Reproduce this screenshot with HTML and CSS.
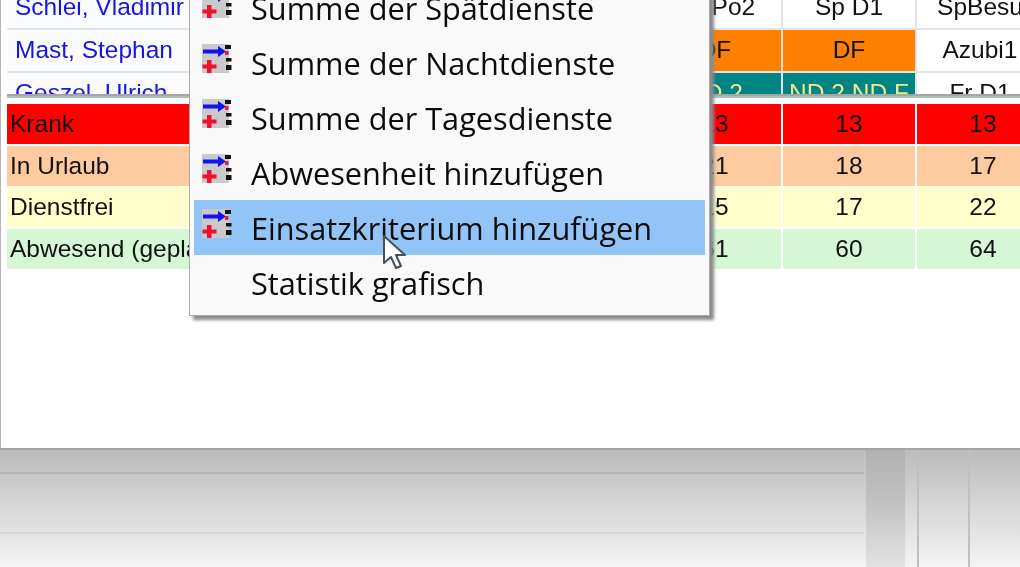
FILE: index.html
```html
<!DOCTYPE html>
<html lang="de">
<head>
<meta charset="utf-8">
<title>Dienstplan</title>
<link rel="stylesheet" href="styles.css">
</head>
<body>
<svg class="defs" width="0" height="0" aria-hidden="true">
  <symbol id="sum" viewBox="0 0 30 30">
    <rect x="0" y="0" width="27" height="29" fill="#cacaca"/>
    <path d="M1 5.500h15v-3.500l8 5.500-8 5.500v-3.500h-15z" fill="#1212f2"/>
    <path d="M5 16h4.500v4.500h5v4h-5v4.500h-4.500v-4.500h-4.500v-4h4.500z" fill="#f01030"/>
    <rect x="23" y="1" width="6" height="4" fill="#111"/>
    <rect x="23" y="7" width="3.500" height="4" fill="#e02040"/>
    <rect x="24" y="14" width="5.500" height="3.500" fill="#111"/>
    <rect x="24" y="21" width="5.500" height="5" fill="#111"/>
  </symbol>
</svg>
<div class="screen">
  <main class="window">
    <section class="plan">
      <div class="grid plan-grid">
        <div class="cell name">Schlei, Vladimir</div><div class="cell">Sp Po2</div><div class="cell">Sp D1</div><div class="cell shift">SpBesu</div>
        <div class="cell name">Mast, Stephan</div><div class="cell orange">DF</div><div class="cell orange">DF</div><div class="cell shift">Azubi1</div>
        <div class="cell name">Geszel, Ulrich</div><div class="cell teal">ND 2</div><div class="cell teal">ND 2 ND F</div><div class="cell shift">Fr D1</div>
      </div>
    </section>
    <div class="divider"></div>
    <section class="grid summary">
      <div class="cell label red">Krank</div><div class="cell red">13</div><div class="cell red">13</div><div class="cell red">13</div>
      <div class="cell label peach">In Urlaub</div><div class="cell peach">21</div><div class="cell peach">18</div><div class="cell peach">17</div>
      <div class="cell label yellow">Dienstfrei</div><div class="cell yellow">15</div><div class="cell yellow">17</div><div class="cell yellow">22</div>
      <div class="cell label green">Abwesend (geplant)</div><div class="cell green">61</div><div class="cell green">60</div><div class="cell green">64</div>
    </section>
  </main>
  <footer class="bottom">
    <div class="tracks">
      <div class="track first"></div>
      <div class="track second"></div>
    </div>
    <div class="gutter"></div>
    <div class="pane"></div>
    <div class="pane wide"></div>
    <div class="pane last"></div>
  </footer>
  <nav class="menu">
    <div class="item"><svg class="icon"><use href="#sum"/></svg><span>Summe der Spätdienste</span></div>
    <div class="item"><svg class="icon"><use href="#sum"/></svg><span>Summe der Nachtdienste</span></div>
    <div class="item"><svg class="icon"><use href="#sum"/></svg><span>Summe der Tagesdienste</span></div>
    <div class="item"><svg class="icon"><use href="#sum"/></svg><span>Abwesenheit hinzufügen</span></div>
    <div class="item active"><svg class="icon"><use href="#sum"/></svg><span>Einsatzkriterium hinzufügen</span></div>
    <div class="item"><span class="icon"></span><span>Statistik grafisch</span></div>
  </nav>
  <svg class="pointer" width="26" height="36" viewBox="0 0 26 36">
    <path d="M2 1v27l7-6 5 11 5-2-5-11h9z" fill="#fff" stroke="#46505e" stroke-width="2" stroke-linejoin="round"/>
  </svg>
</div>
</body>
</html>
```
FILE: styles.css
```css
html, body {
  margin: 0;
  padding: 0;
  background: #fff;
}
.defs {
  position: absolute;
}
.screen {
  position: relative;
  width: 1020px;
  height: 567px;
  overflow: hidden;
  filter: blur(0.6px);
}
.window {
  height: 448px;
  box-sizing: border-box;
  padding-left: 6px;
  background: #fff;
  border-left: 1px solid #b5b5b5;
  overflow: hidden;
}
.plan {
  height: 94px;
  overflow: hidden;
  border-bottom: 2px solid #a6a6a6;
}
.grid {
  display: grid;
  grid-template-columns: 640px 132px 132px 132px;
  column-gap: 2px;
  font-family: "Liberation Sans", Arial, sans-serif;
  font-size: 24.500px;
  color: #111;
}
.plan-grid {
  margin-top: -13px;
  grid-auto-rows: 41px;
  row-gap: 2px;
  background: #e2e4e7;
}
.cell {
  background: #fff;
  text-align: center;
  line-height: 39px;
  white-space: nowrap;
  overflow: hidden;
}
.name {
  text-align: left;
  padding-left: 8px;
  color: #1616dc;
  background: #fafbfc;
}
.shift {
  padding-right: 6px;
}
.orange {
  background: #ff8000;
}
.teal {
  background: #008484;
  color: #f2e88c;
}
.divider {
  height: 8px;
  box-sizing: border-box;
  border-top: 2px solid #a9c0c0;
  background: #fff;
}
.summary {
  grid-auto-rows: 40px;
  row-gap: 1.600px;
}
.label {
  text-align: left;
  padding-left: 3px;
}
.red {
  background: #fe0000;
}
.peach {
  background: #fdcb9f;
}
.yellow {
  background: #ffffcc;
}
.green {
  background: #d6f7d6;
}
.bottom {
  height: 119px;
  display: flex;
  border-top: 2px solid #a4a4a4;
  box-sizing: border-box;
  background: linear-gradient(#bcbcbc, #c8c8c8 22%, #dedede 62%, #f4f4f4);
}
.tracks {
  width: 864px;
}
.track {
  box-sizing: border-box;
  border-bottom: 2px solid #b4b4b4;
}
.track.first {
  height: 24px;
}
.track.second {
  height: 60px;
  border-bottom-color: #d6d6d6;
}
.gutter {
  width: 39px;
  margin-left: 2px;
  background: linear-gradient(rgba(0, 0, 0, 0.06), rgba(0, 0, 0, 0.09) 40%, rgba(0, 0, 0, 0.07));
}
.pane {
  width: 12px;
  border-right: 2px solid #c0c0c0;
}
.pane.wide {
  width: 49px;
}
.pane.last {
  flex: 1;
  border-right: 0;
}
.menu {
  position: absolute;
  left: 189px;
  top: -26px;
  width: 521px;
  box-sizing: border-box;
  padding: 5px 4px 5px;
  background: #f9f9f9;
  border: 1px solid #a9a9a9;
  box-shadow: 4px 4px 3px #8a8a8a;
  font-family: "Open Sans", "Noto Sans", sans-serif;
  font-size: 30.700px;
  color: #0c0c0c;
}
.item {
  display: flex;
  align-items: center;
  height: 55px;
}
.active {
  background: #93c4f8;
}
.icon {
  width: 30px;
  height: 30px;
  margin: -8px 19px 0 8px;
  flex: none;
}
.pointer {
  position: absolute;
  left: 382px;
  top: 235px;
}
```
